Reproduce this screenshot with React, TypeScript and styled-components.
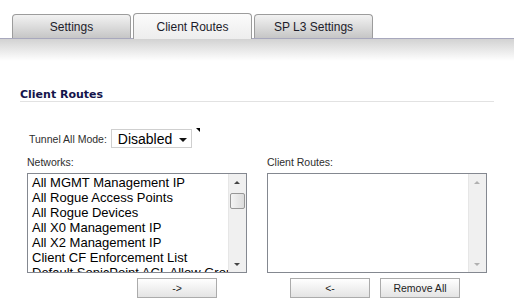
import React from 'react'
import styled, { createGlobalStyle } from 'styled-components'

const GlobalStyle = createGlobalStyle`
  html, body {
    margin: 0;
    padding: 0;
    background: #ffffff;
  }
  body {
    font-family: "Liberation Sans", Arial, sans-serif;
  }
`

const networks = [
  'All MGMT Management IP',
  'All Rogue Access Points',
  'All Rogue Devices',
  'All X0 Management IP',
  'All X2 Management IP',
  'Client CF Enforcement List',
  'Default SonicPoint ACL Allow Group',
]

const tabs = ['Settings', 'Client Routes', 'SP L3 Settings']

// tab strip
const TabBar = styled.div`
  display: flex;
  align-items: flex-end;
  gap: 2px;
  height: 38px;
  padding-left: 12px;
`

const Tab = styled.div<{ $active?: boolean }>`
  width: 117px;
  height: ${p => (p.$active ? '25px' : '22px')};
  margin-bottom: ${p => (p.$active ? '-1px' : '0')};
  position: relative;
  z-index: ${p => (p.$active ? 2 : 1)};
  border: 1px solid #9c9c9c;
  border-bottom: none;
  border-radius: 4px 4px 0 0;
  background: ${p =>
    p.$active
      ? 'linear-gradient(#fbfbfb, #ededed)'
      : 'linear-gradient(#f2f2f2, #c6c6c6)'};
  display: flex;
  align-items: center;
  justify-content: center;
  font-size: 12px;
  color: #1c1c2a;
  padding-top: ${p => (p.$active ? '0' : '1px')};
`

const Band = styled.div`
  height: 22px;
  border-top: 1px solid #a8a8bd;
  background: linear-gradient(#d2d2d2, #ffffff);
`

const Content = styled.div`
  padding: 27px 20px 0 20px;
`

const Heading = styled.div`
  font-family: "DejaVu Sans", Verdana, sans-serif;
  font-weight: bold;
  font-size: 11px;
  color: #14144a;
  line-height: 13px;
  border-bottom: 1px solid #e2e2e2;
`

const ModeRow = styled.div`
  display: flex;
  align-items: center;
  margin-top: 27px;
  padding-left: 9px;
  gap: 5px;
`

const Label = styled.span`
  font-size: 10.5px;
  color: #2e2e2e;
`

const SelectWrap = styled.div`
  position: relative;
  display: flex;
  align-items: center;
`

const Select = styled.div`
  width: 69px;
  height: 17px;
  border: 1px solid #cfcfcf;
  background: #fff;
  display: flex;
  align-items: center;
  justify-content: space-between;
  padding: 0 4px 0 6px;
  box-sizing: content-box;
  font-size: 14px;
  color: #000;
  margin-left: -1px;
`

const Caret = styled.span`
  width: 0;
  height: 0;
  border-left: 4px solid transparent;
  border-right: 4px solid transparent;
  border-top: 4px solid #111;
  margin-top: 2px;
`

const CornerMark = styled.span`
  position: absolute;
  right: -8px;
  top: -1px;
  width: 0;
  height: 0;
  border-top: 4px solid #000;
  border-left: 4px solid transparent;
`

const Columns = styled.div`
  display: grid;
  grid-template-columns: 220px 220px;
  column-gap: 20px;
  padding-left: 7px;
  margin-top: 7px;
`

const Column = styled.div`
  display: flex;
  flex-direction: column;
`

const ColLabel = styled(Label)`
  line-height: 14px;
  margin-bottom: 4px;
`

const ListBox = styled.div`
  height: 98px;
  border: 1px solid #848890;
  background: #fff;
  display: flex;
  overflow: hidden;
`

const Items = styled.div`
  flex: 1;
  padding: 1px 0 0 4px;
  overflow: hidden;
`

const Item = styled.div`
  font-size: 13px;
  line-height: 15px;
  color: #000;
  white-space: nowrap;
`

const ScrollBar = styled.div`
  width: 17px;
  background: #f0f0f0;
  border-left: 1px solid #e6e6e6;
  position: relative;
`

const Arrow = styled.span<{ $down?: boolean; $disabled?: boolean }>`
  position: absolute;
  left: 5px;
  ${p => (p.$down ? 'bottom: 6px;' : 'top: 7px;')}
  width: 0;
  height: 0;
  border-left: 3.5px solid transparent;
  border-right: 3.5px solid transparent;
  ${p =>
    p.$down
      ? `border-top: 3px solid ${p.$disabled ? '#b0b0b0' : '#444'};`
      : `border-bottom: 3px solid ${p.$disabled ? '#b0b0b0' : '#444'};`}
`

const Thumb = styled.span`
  position: absolute;
  top: 19px;
  left: 1px;
  width: 13px;
  height: 14px;
  border: 1px solid #979797;
  border-radius: 2px;
  background: linear-gradient(90deg, #f4f4f4, #dcdcdc);
`

const Buttons = styled.div<{ $center?: boolean }>`
  display: flex;
  gap: 10px;
  margin-top: 5px;
  padding-left: ${p => (p.$center ? '23px' : '110px')};
`

const Button = styled.div`
  width: 78px;
  height: 18px;
  border: 1px solid #ababab;
  background: linear-gradient(#ffffff, #e4e4e4);
  display: flex;
  align-items: center;
  justify-content: center;
  font-size: 10.5px;
  color: #1e1e1e;
`

const List = ({ items, disabled }: { items: string[]; disabled?: boolean }) => (
  <ListBox>
    <Items>
      {items.map(i => (
        <Item key={i}>{i}</Item>
      ))}
    </Items>
    <ScrollBar>
      <Arrow $disabled={disabled} />
      {!disabled && <Thumb />}
      <Arrow $down $disabled={disabled} />
    </ScrollBar>
  </ListBox>
)

export default function App() {
  return (
    <>
      <GlobalStyle />
      <TabBar>
        {tabs.map(t => (
          <Tab key={t} $active={t === 'Client Routes'}>
            {t}
          </Tab>
        ))}
      </TabBar>
      <Band />
      <Content>
        <Heading>Client Routes</Heading>
        <ModeRow>
          <Label>Tunnel All Mode:</Label>
          <SelectWrap>
            <Select>
              Disabled
              <Caret />
            </Select>
            <CornerMark />
          </SelectWrap>
        </ModeRow>
        <Columns>
          <Column>
            <ColLabel>Networks:</ColLabel>
            <List items={networks} />
            <Buttons>
              <Button>-&gt;</Button>
            </Buttons>
          </Column>
          <Column>
            <ColLabel>Client Routes:</ColLabel>
            <List items={[]} disabled />
            <Buttons $center>
              <Button>&lt;-</Button>
              <Button>Remove All</Button>
            </Buttons>
          </Column>
        </Columns>
      </Content>
    </>
  )
}
